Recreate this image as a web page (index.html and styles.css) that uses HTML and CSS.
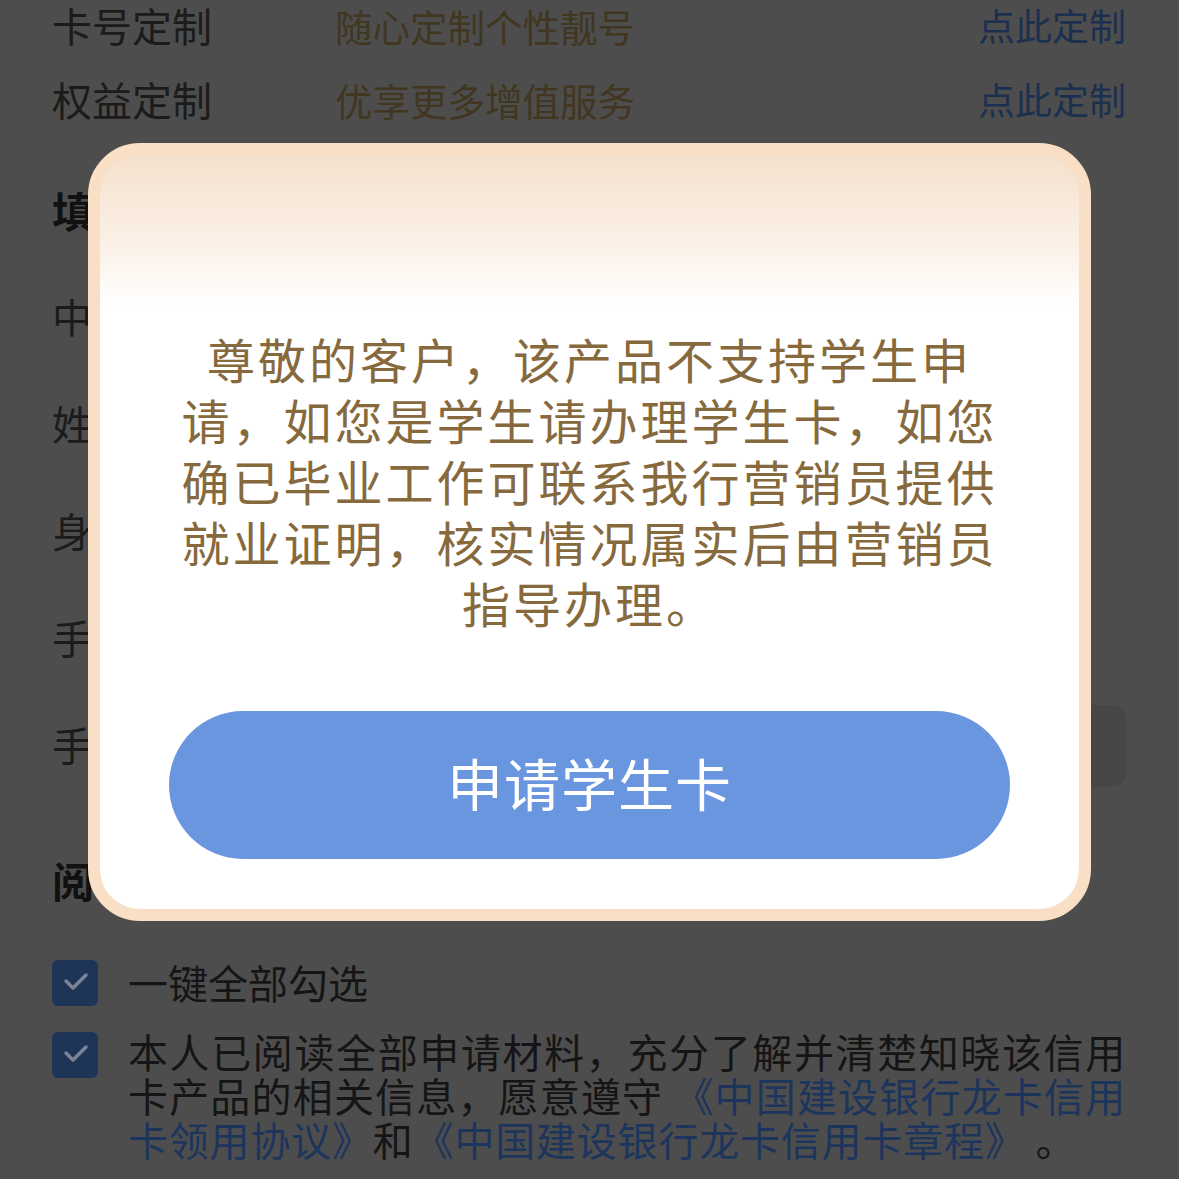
FILE: index.html
```html
<!DOCTYPE html>
<html lang="zh-CN">
<head>
    <meta charset="UTF-8">
    <meta name="viewport" content="width=device-width, initial-scale=1.0">
    <title>龙卡信用卡申请</title>
    <link rel="stylesheet" href="styles.css">
</head>
<body>

    <div class="page">
        <div class="custom-row">
            <span class="custom-label">卡号定制</span>
            <span class="custom-desc">随心定制个性靓号</span>
            <span class="custom-link">点此定制</span>
        </div>
        <div class="custom-row">
            <span class="custom-label">权益定制</span>
            <span class="custom-desc">优享更多增值服务</span>
            <span class="custom-link">点此定制</span>
        </div>

        <h2 class="section-title">填写基本信息</h2>
        <div class="form-row"><span class="form-label">中文姓名</span><div class="form-input"></div></div>
        <div class="form-row"><span class="form-label">姓名拼音</span><div class="form-input"></div></div>
        <div class="form-row"><span class="form-label">身份证号</span><div class="form-input"></div></div>
        <div class="form-row"><span class="form-label">手机号码</span><div class="form-input"></div></div>
        <div class="form-row"><span class="form-label">手机验证码</span><div class="form-input boxed"></div></div>

        <h2 class="section-title agree-title">阅读并同意协议</h2>
        <div class="check-row">
            <span class="check-box">
                <svg width="46" height="46" viewBox="0 0 46 46"><path d="M14 21 L21 28 L34 15" fill="none" stroke="#7b8496" stroke-width="3.5" stroke-linecap="round" stroke-linejoin="round"/></svg>
            </span>
            <span class="check-text">一键全部勾选</span>
        </div>
        <div class="check-row">
            <span class="check-box">
                <svg width="46" height="46" viewBox="0 0 46 46"><path d="M14 21 L21 28 L34 15" fill="none" stroke="#7b8496" stroke-width="3.5" stroke-linecap="round" stroke-linejoin="round"/></svg>
            </span>
            <p class="check-text agree-text">本人已阅读全部申请材料，充分了解并清楚知晓该信用卡产品的相关信息，愿意遵守 <a class="doc-link">《中国建设银行龙卡信用卡领用协议》</a>和<a class="doc-link">《中国建设银行龙卡信用卡章程》</a> 。</p>
        </div>
    </div>

    <!-- 学生提示弹窗 -->
    <div class="mask">
        <div class="dialog">
            <div class="dialog-inner">
                <p class="dialog-text">尊敬的客户，该产品不支持学生申请，如您是学生请办理学生卡，如您确已毕业工作可联系我行营销员提供就业证明，核实情况属实后由营销员指导办理。</p>
                <button class="dialog-btn">申请学生卡</button>
            </div>
        </div>
    </div>

</body>
</html>
```

FILE: styles.css
```css
body {
    margin: 0;
    background-color: #4d4d4d; /* 页面被遮罩压暗后的颜色 */
    font-family: "Noto Sans CJK SC", "Noto Sans", sans-serif;
    color: #1b1b1b;
    overflow: hidden;
}
.page {
    padding: 0 53px 0 52px;
    margin-top: -4px;
}
.custom-row {
    display: grid;
    grid-template-columns: 283px 1fr auto;
    align-items: center;
    height: 56px;
    margin-bottom: 18px;
}
.custom-label {
    font-size: 40px;
}
.custom-desc {
    font-size: 37.5px;
    color: #41361f;
}
.custom-link {
    font-size: 37px;
    color: #1b2f50;
}
.section-title {
    margin: 56px 0 0;
    height: 56px;
    line-height: 56px;
    font-size: 42px;
    font-weight: bold;
    color: #111;
}
.form-row {
    display: flex;
    align-items: center;
    height: 107px;
}
.section-title + .form-row {
    margin-top: 24px;
}
.form-label {
    width: 283px;
    font-size: 40px;
}
.form-input {
    flex: 1;
    height: 82px;
    border-radius: 14px;
}
.form-input.boxed {
    background-color: #474747;
    margin-top: 5px;
}
.agree-title {
    margin-top: 55px;
}
.check-row {
    display: flex;
    align-items: flex-start;
    gap: 30px;
}
.agree-title + .check-row {
    margin-top: 52px;
}
.check-row + .check-row {
    margin-top: 26px;
}
.check-box {
    flex: none;
    width: 46px;
    height: 46px;
    border-radius: 6px;
    background-color: #1f3558;
}
.check-box svg {
    display: block;
}
.check-text {
    margin: 0;
    font-size: 40px;
    line-height: 45px;
    color: #151515;
}
.agree-text {
    flex: 1;
    margin-top: -3px;
    line-height: 44px;
    letter-spacing: 0.8px;
    text-align: justify;
}
.doc-link {
    color: #1d355c;
}

/* 弹窗 */
.mask {
    position: fixed;
    top: 0;
    left: 0;
    right: 0;
    bottom: 0;
    display: flex;
    justify-content: center;
    align-items: flex-start;
    padding-top: 143px;
}
.dialog {
    width: 1003px;
    box-sizing: border-box;
    border: 12px solid #f8dfc5;
    border-radius: 52px;
    background-color: #f8dfc5;
}
.dialog-inner {
    border-radius: 40px;
    background: linear-gradient(#f5e1cd 0, #fbf1e7 90px, #fff 150px);
    padding: 173px 69px 50px 69px;
    text-align: center;
}
.dialog-text {
    margin: 0;
    font-size: 48px;
    line-height: 61px;
    letter-spacing: 3px;
    color: #86693c;
}
.dialog-btn {
    display: block;
    width: 100%;
    height: 148px;
    margin-top: 78px;
    padding: 0 0 8px;
    border: none;
    border-radius: 74px;
    background-color: #6a96e0;
    color: #fff;
    font-family: inherit;
    font-size: 56px;
    letter-spacing: 1px;
}
```
